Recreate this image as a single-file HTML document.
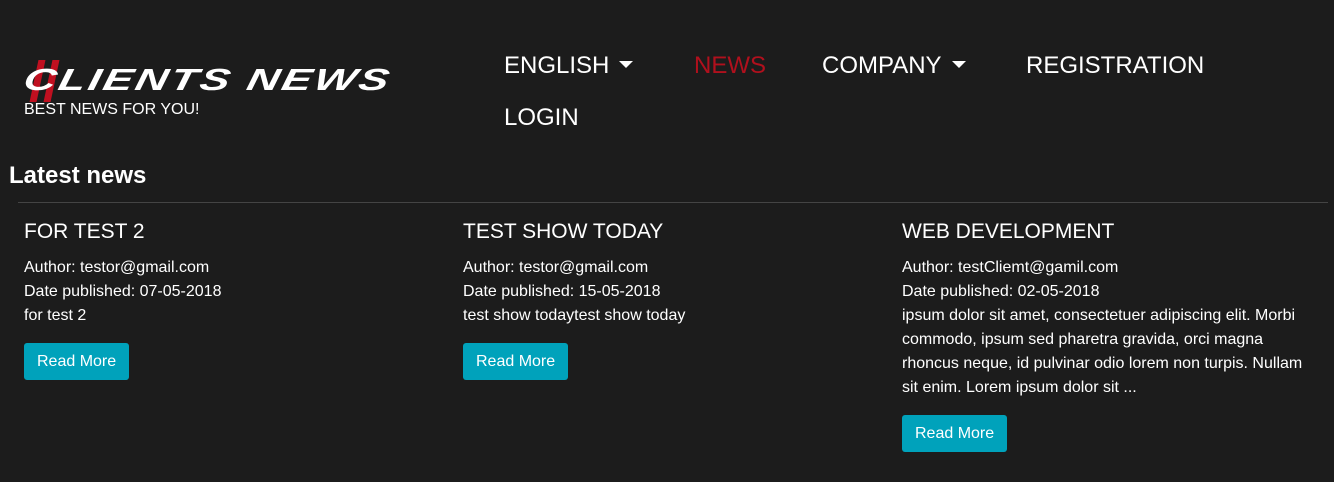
<!DOCTYPE html>
<html><head><meta charset="utf-8"><style>
body{margin:0;width:1334px;height:482px;background:#1c1c1c;font-family:"Liberation Sans",sans-serif;color:#fff;position:relative;overflow:hidden}
.a{position:absolute;white-space:nowrap}
.logo{left:28px;top:62px;font-size:36px;font-weight:bold;font-style:italic;letter-spacing:2px;transform:skewX(-12deg) scale(1.24,0.85);transform-origin:left top}
.nav{font-size:24px;top:52px}
.car{display:inline-block;border-left:7px solid transparent;border-right:7px solid transparent;border-top:7px solid #fff;vertical-align:middle;margin-left:10px;margin-top:-4px}
.t{font-size:21px}
.p{font-size:16px;line-height:24px}
.btn{position:absolute;background:#00a2bb;border-radius:3px;color:#fff;font-size:16px;padding:9px 13px;}
</style></head><body>
<div class="a" style="left:34px;top:60px;width:7px;height:42px;background:#c01020;transform:skewX(-12deg)"></div>
<div class="a" style="left:48px;top:60px;width:7px;height:42px;background:#c01020;transform:skewX(-12deg)"></div>
<div class="a logo">CLIENTS NEWS</div>
<div class="a" style="left:24px;top:101px;font-size:16px">BEST NEWS FOR YOU!</div>
<div class="a nav" style="left:504px">ENGLISH<span class="car"></span></div>
<div class="a nav" style="left:694px;color:#b0101d">NEWS</div>
<div class="a nav" style="left:822px">COMPANY<span class="car"></span></div>
<div class="a nav" style="left:1026px">REGISTRATION</div>
<div class="a nav" style="left:504px;top:104px">LOGIN</div>
<div class="a" style="left:9px;top:162px;font-size:24px;font-weight:bold">Latest news</div>
<div class="a" style="left:18px;top:202px;width:1310px;height:1px;background:#444"></div>

<div class="a t" style="left:24px;top:220px">FOR TEST 2</div>
<div class="a p" style="left:24px;top:256px">Author: testor@gmail.com<br>Date published: 07-05-2018<br>for test 2</div>
<div class="btn" style="left:24px;top:343px;padding:10px 13px 9px">Read More</div>

<div class="a t" style="left:463px;top:220px">TEST SHOW TODAY</div>
<div class="a p" style="left:463px;top:256px">Author: testor@gmail.com<br>Date published: 15-05-2018<br>test show todaytest show today</div>
<div class="btn" style="left:463px;top:343px;padding:10px 13px 9px">Read More</div>

<div class="a t" style="left:902px;top:220px">WEB DEVELOPMENT</div>
<div class="a p" style="left:902px;top:256px">Author: testCliemt@gamil.com<br>Date published: 02-05-2018<br>ipsum dolor sit amet, consectetuer adipiscing elit. Morbi<br>commodo, ipsum sed pharetra gravida, orci magna<br>rhoncus neque, id pulvinar odio lorem non turpis. Nullam<br>sit enim. Lorem ipsum dolor sit ...</div>
<div class="btn" style="left:902px;top:415px;padding:10px 13px 9px">Read More</div>
</body></html>
